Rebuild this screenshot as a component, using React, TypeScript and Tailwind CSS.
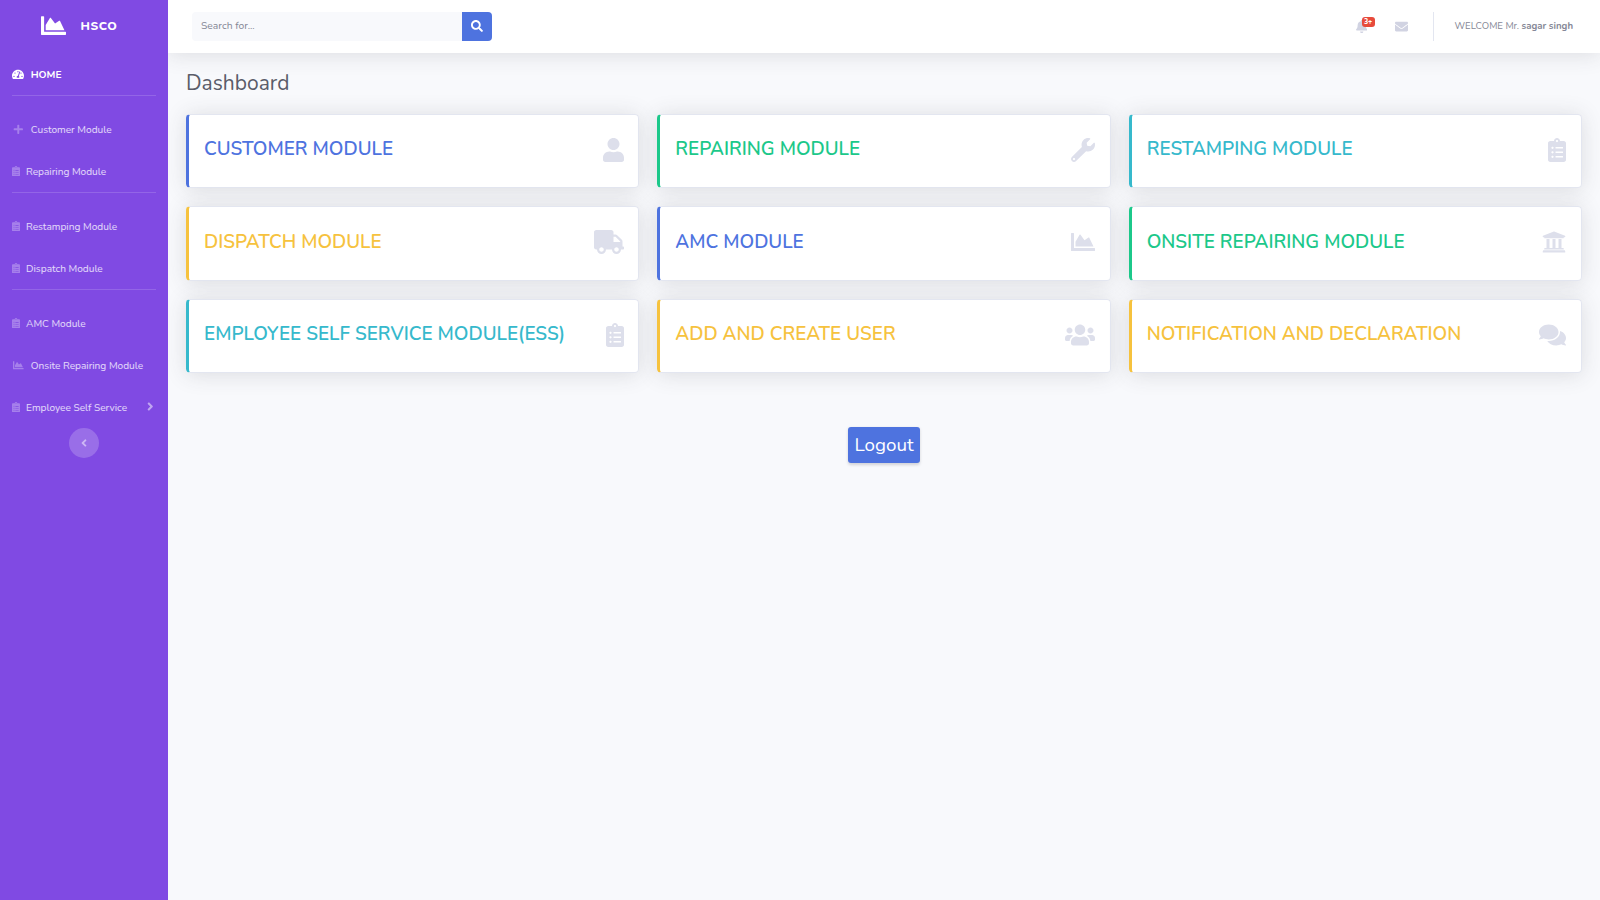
import type { IconType } from 'react-icons';
import {
  FaAngleLeft,
  FaAngleRight,
  FaBell,
  FaChartArea,
  FaClipboardList,
  FaComments,
  FaEnvelope,
  FaPlus,
  FaSearch,
  FaTachometerAlt,
  FaTruck,
  FaUniversity,
  FaUser,
  FaUsers,
  FaWrench,
} from 'react-icons/fa';

type NavEntry = { label: string; icon: IconType; wide?: boolean; arrow?: boolean };

const navGroups: NavEntry[][] = [
  [
    { label: 'Customer Module', icon: FaPlus, wide: true },
    { label: 'Repairing Module', icon: FaClipboardList },
  ],
  [
    { label: 'Restamping Module', icon: FaClipboardList },
    { label: 'Dispatch Module', icon: FaClipboardList },
  ],
  [
    { label: 'AMC Module', icon: FaClipboardList },
    { label: 'Onsite Repairing Module', icon: FaChartArea, wide: true },
    { label: 'Employee Self Service', icon: FaClipboardList, arrow: true },
  ],
];

const tones = {
  blue: 'border-l-[#4e73df] text-[#4e73df]',
  green: 'border-l-[#1cc88a] text-[#1cc88a]',
  teal: 'border-l-[#36b9cc] text-[#36b9cc]',
  yellow: 'border-l-[#f6c23e] text-[#f6c23e]',
};

const modules: { title: string; tone: keyof typeof tones; icon: IconType; iconWidth: string }[] = [
  { title: 'CUSTOMER MODULE', tone: 'blue', icon: FaUser, iconWidth: 'w-[21px]' },
  { title: 'REPAIRING MODULE', tone: 'green', icon: FaWrench, iconWidth: 'w-6' },
  { title: 'RESTAMPING MODULE', tone: 'teal', icon: FaClipboardList, iconWidth: 'w-[18px]' },
  { title: 'DISPATCH MODULE', tone: 'yellow', icon: FaTruck, iconWidth: 'w-[30px]' },
  { title: 'AMC MODULE', tone: 'blue', icon: FaChartArea, iconWidth: 'w-6' },
  { title: 'ONSITE REPAIRING MODULE', tone: 'green', icon: FaUniversity, iconWidth: 'w-6' },
  { title: 'EMPLOYEE SELF SERVICE MODULE(ESS)', tone: 'teal', icon: FaClipboardList, iconWidth: 'w-[18px]' },
  { title: 'ADD AND CREATE USER', tone: 'yellow', icon: FaUsers, iconWidth: 'w-[30px]' },
  { title: 'NOTIFICATION AND DECLARATION', tone: 'yellow', icon: FaComments, iconWidth: 'w-[27px]' },
];

function NavItem({ label, icon: Icon, wide, arrow }: NavEntry) {
  return (
    <a href="#" className="flex h-[42px] items-center pr-[15px] pl-3 text-[10.15px] text-white/80">
      <span className={wide ? 'mr-[6px] flex w-[12.75px] justify-center' : 'mr-[6px] flex'}>
        <Icon className={`h-[10.6px] text-white/30 ${wide ? 'w-[10.6px]' : 'w-[8px]'}`} />
      </span>
      <span className="whitespace-nowrap pt-[3px]">{label}</span>
      {arrow && <FaAngleRight className="mb-[2px] ml-auto h-[13px] w-[6.5px] text-white/50" />}
    </a>
  );
}

function Divider() {
  return <hr className="mx-3 mb-3 border-t border-white/15" />;
}

function Sidebar() {
  return (
    <aside className="w-[168px] shrink-0 bg-[#804ae3]">
      <div className="flex h-[53px] items-center pb-[3px] pl-[41px] text-white">
        <FaChartArea className="size-[25px]" />
        <span className="ml-[14.5px] pt-px text-xs font-extrabold tracking-[0.6px]">HSCO</span>
      </div>
      <a href="#" className="flex h-[42px] items-center pl-3 text-[10.2px] font-bold text-white">
        <span className="mr-[6px] flex w-[12.75px] justify-center">
          <FaTachometerAlt className="h-[10.8px] w-[12px]" />
        </span>
        <span className="pt-[3px]">HOME</span>
      </a>
      {navGroups.map((group, i) => (
        <div key={i}>
          <Divider />
          {group.map((entry) => (
            <NavItem key={entry.label} {...entry} />
          ))}
        </div>
      ))}
      <button className="mx-auto flex size-[30px] items-center justify-center rounded-full bg-white/20 text-white/50">
        <FaAngleLeft className="h-3 w-1.5" />
      </button>
    </aside>
  );
}

function Topbar() {
  return (
    <header className="flex h-[53px] items-center bg-white pl-6 shadow-[0_1.8px_21px_0_rgba(58,59,69,0.15)]">
      <form className="flex h-[29px] w-[300px]">
        <input
          type="text"
          placeholder="Search for..."
          className="h-full min-w-0 flex-1 rounded-l-[4px] bg-[#f8f9fc] px-[9px] pb-[2px] text-[10.3px] placeholder:text-[#858796]"
        />
        <button
          type="button"
          className="flex w-[30px] items-center justify-center rounded-r-[4px] bg-[#4e73df] pb-[2px] text-white"
        >
          <FaSearch className="size-3" />
        </button>
      </form>
      <div className="ml-auto flex h-[29px] items-center pr-[27px]">
        <div className="relative mr-[27.5px] text-[#d1d3e2]">
          <FaBell className="mt-[-1px] h-[13px] w-[11.4px]" />
          <span className="absolute top-[-4px] left-[6px] flex h-[10px] w-[13px] items-center justify-center rounded-[3px] bg-[#e74a3b] text-[7px] leading-none font-extrabold text-white">
            3+
          </span>
        </div>
        <FaEnvelope className="mr-[25px] mb-[1px] size-[13px] text-[#d1d3e2]" />
        <div className="mr-[21px] h-full w-px bg-[#e3e6f0]" />
        <p className="pb-px text-[9.6px] whitespace-nowrap text-[#858796]">
          WELCOME Mr. <b className="font-bold">sagar singh</b>
        </p>
      </div>
    </header>
  );
}

export default function App() {
  return (
    <div className="flex h-[900px] w-[1600px] overflow-hidden bg-[#f8f9fc] font-[Nunito,Lato,sans-serif]">
      <Sidebar />
      <div className="min-w-0 flex-1 overflow-hidden">
        <Topbar />
        <main className="px-[18px] pt-[18px]">
          <h1 className="text-[21px] leading-[25px] font-normal text-[#5a5c69]">Dashboard</h1>
          <div className="mt-[17.9px] grid grid-cols-3 gap-[18px]">
            {modules.map(({ title, tone, icon: Icon, iconWidth }) => (
              <section
                key={title}
                className={`flex h-[74.4px] items-center justify-between rounded-[4.2px] border border-l-[3px] border-[#e3e6f0] bg-white pr-[14.6px] pl-[15px] shadow-[0_1.8px_21px_0_rgba(58,59,69,0.15)] ${tones[tone]}`}
              >
                <h2 className="pb-[3.2px] text-[18.9px] font-semibold whitespace-nowrap">{title}</h2>
                <Icon className={`mb-[2.4px] h-6 text-[#dddfeb] ${iconWidth}`} />
              </section>
            ))}
          </div>
          <button className="mx-auto mt-[54px] flex h-9 w-[72px] items-center justify-center rounded-[3px] bg-[#4e73df] text-[18.8px] text-white shadow-[0_1.5px_3px_0_rgba(58,59,69,0.2)]">
            Logout
          </button>
        </main>
      </div>
    </div>
  );
}
